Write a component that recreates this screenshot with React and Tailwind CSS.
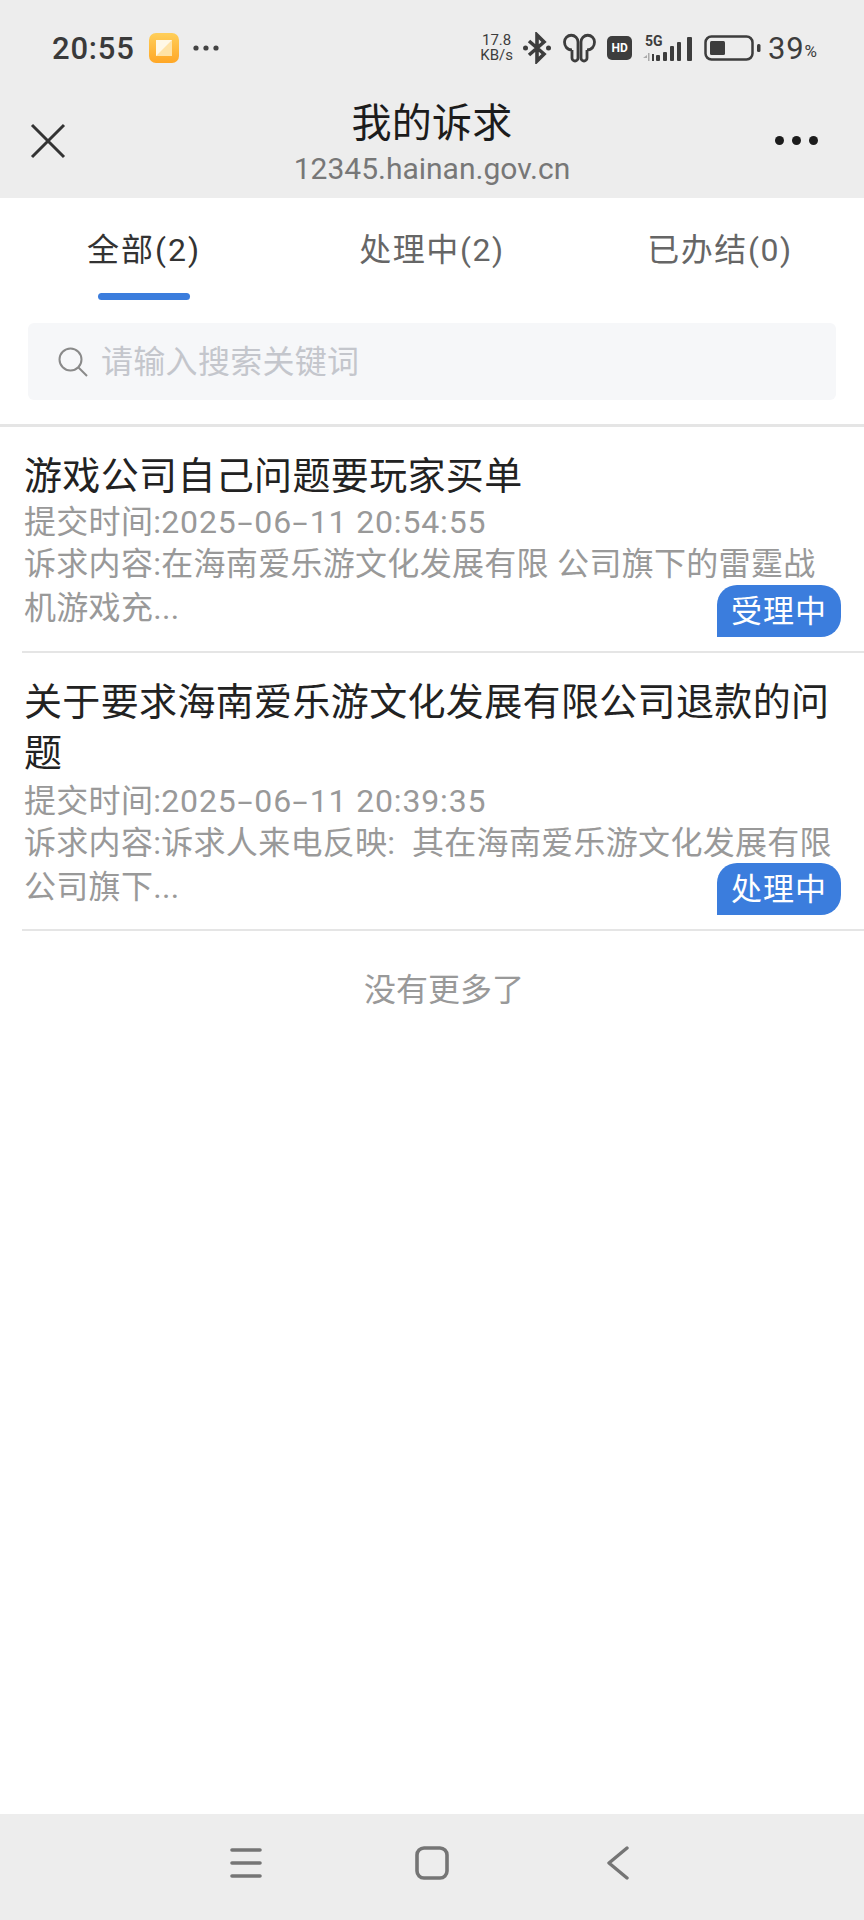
import React from "react";

function Item({ title, date, content, line2, badge, second }) {
  const parts = date.split("-");
  return (
    <div className={second ? "relative ml-[22px] border-b-2 border-[#e5e5e5] pt-[24px] pb-[20px] pl-[2px]" : "relative ml-[22px] border-b-2 border-[#e5e5e5] pt-[24px] pb-[21px] pl-[2px]"}>
      <div className={second ? "text-[38px] leading-[51px] tracking-[0.35px] text-[#222222] pr-[30px] mb-[3px]" : "text-[38px] leading-[51px] tracking-[0.35px] text-[#222222] pr-[30px] mb-[1px]"}>{title}</div>
      <div className="text-[32px] leading-[38px] tracking-[0.3px] text-[#999999]">
        提交时间:
        <span className="tracking-[0.85px]">
          {parts[0]}
          <span className="inline-block scale-x-[1.7] px-[4px]">-</span>
          {parts[1]}
          <span className="inline-block scale-x-[1.7] px-[4px]">-</span>
          {parts[2]}
        </span>
      </div>
      <div className="mt-[1px] text-[32px] leading-[44px] tracking-[0.3px] text-[#999999] whitespace-nowrap">
        <div>{content}</div>
        <div>{line2}</div>
      </div>
      <div className="absolute right-[23px] bottom-[14px] h-[52px] w-[124px] bg-[#3b7ddd] rounded-tl-[20px] rounded-tr-[20px] rounded-br-[20px] flex items-center justify-center text-[31px] tracking-[1px] leading-none text-white">{badge}</div>
    </div>
  );
}

export default function App() {
  return (
    <div className="w-[864px] h-[1920px] flex flex-col bg-white overflow-hidden font-['Roboto','Noto_Sans_CJK_SC',sans-serif]">
      <div className="h-[198px] bg-[#ededed] flex flex-col">
        <div className="h-[96px] flex items-center justify-between pl-[52px] pr-[47px]">
          <div className="flex items-center">
            <span className="text-[31px] font-medium text-[#3a3a3a] leading-none tracking-[0.8px] w-[97px]">20:55</span>
            <svg width="30" height="30" viewBox="0 0 30 30">
              <defs>
                <linearGradient id="g" x1="0" y1="0" x2="0" y2="1">
                  <stop offset="0" stopColor="#ffcf5a" />
                  <stop offset="1" stopColor="#ffa726" />
                </linearGradient>
              </defs>
              <rect width="30" height="30" rx="7" fill="url(#g)" />
              <rect x="7" y="7" width="16" height="16" fill="#ffe3a6" />
              <path d="M7 23 L23 7 H7 Z" fill="#fff8e6" />
            </svg>
            <svg width="28" height="8" viewBox="0 0 28 8" className="ml-[13px]">
              <circle cx="4" cy="4" r="2.6" fill="#444" />
              <circle cx="14" cy="4" r="2.6" fill="#444" />
              <circle cx="24" cy="4" r="2.6" fill="#444" />
            </svg>
          </div>
          <div className="flex items-center text-[#3d3d3d]">
            <div className="text-[15px] leading-[15px] w-[35px] flex flex-col items-center whitespace-nowrap">
              <span>17.8</span>
              <span>KB/s</span>
            </div>
            <svg width="28" height="32" viewBox="0 0 28 32" className="ml-[9px]" fill="none" stroke="#3d3d3d" strokeWidth="3.6">
              <path d="M6 9 L21 22 L14 29 V3 L21 10 L6 23" />
              <circle cx="2.5" cy="16" r="2.5" fill="#3d3d3d" stroke="none" />
              <circle cx="25.5" cy="16" r="2.5" fill="#3d3d3d" stroke="none" />
            </svg>
            <svg width="33" height="30" viewBox="0 0 33 30" className="ml-[12px]" fill="none" stroke="#3d3d3d" strokeWidth="2.8">
              <path d="M9 17 C4 17 1.5 13 1.5 9 A6.75 6.75 0 0 1 15 9 V25 A3 3 0 0 1 9 25 V17" />
              <path d="M24 17 C29 17 31.5 13 31.5 9 A6.75 6.75 0 0 0 18 9 V25 A3 3 0 0 0 24 25 V17" />
            </svg>
            <div className="ml-[11px] w-[25px] h-[24px] rounded-[5px] bg-[#3d3d3d] text-white text-[12px] font-bold leading-none flex items-center justify-center">HD</div>
            <svg width="51" height="28" viewBox="0 0 51 28" className="ml-[10px]">
              <text x="3" y="12" fontSize="14" fontWeight="700" fill="#3d3d3d" fontFamily="Roboto">5G</text>
              <path d="M5 21 l-4 3 h4 z" fill="#aaa" />
              <rect x="6" y="19" width="1.5" height="8" fill="#aaa" />
              <rect x="10" y="20" width="2" height="7" fill="#3d3d3d" />
              <rect x="14" y="21" width="4" height="6" rx="1" fill="#3d3d3d" />
              <rect x="21" y="18" width="4" height="9" rx="1" fill="#3d3d3d" />
              <rect x="28" y="12" width="4" height="15" rx="1" fill="#3d3d3d" />
              <rect x="35" y="8" width="4" height="19" rx="1" fill="#3d3d3d" />
              <rect x="45" y="3" width="5" height="24" rx="1" fill="#3d3d3d" />
            </svg>
            <svg width="57" height="26" viewBox="0 0 57 26" className="ml-[11px]">
              <rect x="1.5" y="1.5" width="47" height="23" rx="6" fill="none" stroke="#3d3d3d" strokeWidth="2.5" />
              <rect x="6" y="6" width="15" height="14" rx="1.5" fill="#3d3d3d" />
              <rect x="53" y="9" width="3.5" height="8" rx="1.5" fill="#3d3d3d" />
            </svg>
            <span className="ml-[7px] text-[31px] leading-none tracking-[0.8px]">39</span>
            <span className="text-[17px] leading-none mt-[7px]">%</span>
          </div>
        </div>
        <div className="relative flex-1 flex flex-col items-center">
          <div className="text-[40px] leading-[48px] tracking-[0.3px] text-[#1c1c1c] mt-[4px]">我的诉求</div>
          <div className="mt-[3px] text-[30px] leading-[36px] text-[#777777]">12345.hainan.gov.cn</div>
          <svg width="36" height="36" viewBox="0 0 36 36" className="absolute left-[30px] top-[27px]" fill="none" stroke="#333" strokeWidth="3">
            <path d="M2 2 L34 34 M34 2 L2 34" />
          </svg>
          <div className="absolute right-[46px] top-[40px] flex gap-[8px]">
            <div className="w-[9px] h-[9px] rounded-full bg-[#1c1c1c]"></div>
            <div className="w-[9px] h-[9px] rounded-full bg-[#1c1c1c]"></div>
            <div className="w-[9px] h-[9px] rounded-full bg-[#1c1c1c]"></div>
          </div>
        </div>
      </div>

      <div className="h-[101px] grid grid-cols-3 text-[32px] text-[#666666]">
        <div className="flex flex-col items-center">
          <div className="mt-[29px] leading-[46px] text-[#333333] tracking-[2px]">全部(2)</div>
          <div className="mt-[20px] w-[92px] h-[7px] rounded-full bg-[#3b7ddd]"></div>
        </div>
        <div className="flex justify-center"><div className="mt-[29px] leading-[46px] tracking-[1.6px]">处理中(2)</div></div>
        <div className="flex justify-center"><div className="mt-[29px] leading-[46px] tracking-[1.6px]">已办结(0)</div></div>
      </div>

      <div className="mx-[28px] mt-[24px] h-[77px] rounded-[6px] bg-[#f6f7f9] flex items-center pl-[30px]">
        <svg width="30" height="30" viewBox="0 0 30 30" fill="none" stroke="#8a8a8a" strokeWidth="2">
          <circle cx="12.5" cy="12.5" r="11" />
          <path d="M20.5 20.5 L29 29" />
        </svg>
        <span className="ml-[13px] text-[32px] leading-none tracking-[0.3px] text-[#c4c6cc]">请输入搜索关键词</span>
      </div>

      <div className="mt-[24px] h-[3px] bg-[#e5e5e5]"></div>

      <Item title="游戏公司自己问题要玩家买单" date="2025-06-11 20:54:55" content="诉求内容:在海南爱乐游文化发展有限 公司旗下的雷霆战" line2="机游戏充..." badge="受理中" />
      <Item second title="关于要求海南爱乐游文化发展有限公司退款的问题" date="2025-06-11 20:39:35" content={"诉求内容:诉求人来电反映:\u2002其在海南爱乐游文化发展有限"} line2="公司旗下..." badge="处理中" />

      <div className="mt-[37px] pl-[24px] text-center text-[32px] leading-[44px] text-[#999999]">没有更多了</div>

      <div className="mt-auto h-[106px] bg-[#ededed] flex items-center pl-[230px] pb-[8px]">
        <svg width="32" height="30" viewBox="0 0 32 30" stroke="#757575" strokeWidth="3.6" strokeLinecap="round">
          <path d="M2 2 H30 M2 15 H30 M2 28 H30" />
        </svg>
        <svg width="34" height="34" viewBox="0 0 34 34" fill="none" stroke="#757575" strokeWidth="3.6" className="ml-[153px]">
          <rect x="2" y="2" width="30" height="30" rx="7" />
        </svg>
        <svg width="22" height="34" viewBox="0 0 22 34" fill="none" stroke="#757575" strokeWidth="3.4" strokeLinecap="round" strokeLinejoin="round" className="ml-[158px]">
          <path d="M20 2 L2 17 L20 32" />
        </svg>
      </div>
    </div>
  );
}
